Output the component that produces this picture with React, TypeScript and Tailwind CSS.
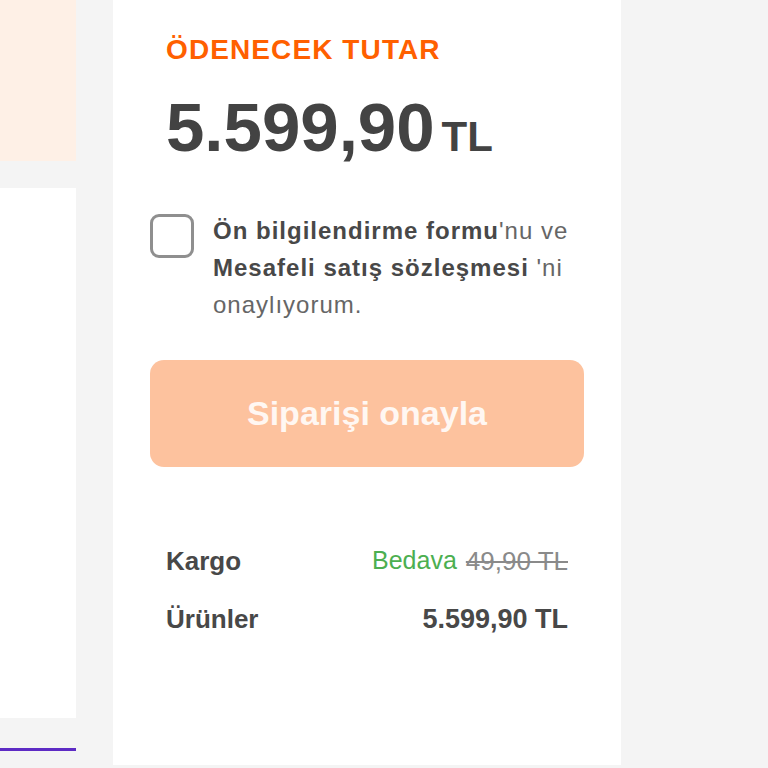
import React from 'react';

const App: React.FC = () => {
  return (
    <div
      className="flex h-[768px] w-[768px] overflow-hidden bg-[#f4f4f4]"
      style={{ fontFamily: '"Liberation Sans", Arial, sans-serif' }}
    >
      {/* left column (cut off) */}
      <div className="flex w-[76px] shrink-0 flex-col">
        <div className="h-[161px] bg-[#fef0e6]" />
        <div className="mt-[27px] h-[530px] bg-white" />
        <div className="mt-[30px] h-[3px] bg-[#5d2bc4]" />
      </div>

      {/* summary panel */}
      <div className="ml-[37px] flex h-[765px] w-[508px] shrink-0 flex-col bg-white px-[37px] pt-[34px]">
        <div className="px-4">
          <h2 className="text-[28px] font-bold leading-8 tracking-[1.1px] text-[#ff6000]">ÖDENECEK TUTAR</h2>
          <div className="mt-[24px] flex items-baseline gap-[7px] text-[#434343]">
            <span className="text-[69px] font-bold leading-[76px]">5.599,90</span>
            <span className="text-[42px] font-bold">TL</span>
          </div>
        </div>

        <label className="mt-[44px] flex items-start gap-5">
          <span className="mt-[2px] h-[44px] w-[44px] shrink-0 rounded-[9px] border-[3px] border-[#8f8f8f]" />
          <span className="-ml-[1px] text-[24px] leading-[37px] tracking-[1px] text-[#666]">
            <b className="font-bold text-[#484848]">Ön bilgilendirme formu</b>'nu ve
            <br />
            <b className="font-bold text-[#484848]">Mesafeli satış sözleşmesi</b> 'ni
            <br />
            onaylıyorum.
          </span>
        </label>

        <button
          type="button"
          disabled
          className="mt-[37px] flex h-[107px] w-full items-center justify-center rounded-[14px] bg-[#fdc29e] text-[34px] font-bold text-[#fff7f2]"
        >
          Siparişi onayla
        </button>

        <div className="mt-[75px] flex flex-col gap-[18px] px-4 text-[26px] text-[#484848]">
          <div className="flex items-center justify-between">
            <span className="font-bold">Kargo</span>
            <span className="flex gap-[9px]">
              <span className="text-[25px] text-[#4caf50]">Bedava</span>
              <span className="text-[#8a8a8a] line-through">49,90 TL</span>
            </span>
          </div>
          <div className="flex items-center justify-between">
            <span className="font-bold">Ürünler</span>
            <span className="text-[27px] font-bold">5.599,90 TL</span>
          </div>
        </div>
      </div>
    </div>
  );
};

export default App;
